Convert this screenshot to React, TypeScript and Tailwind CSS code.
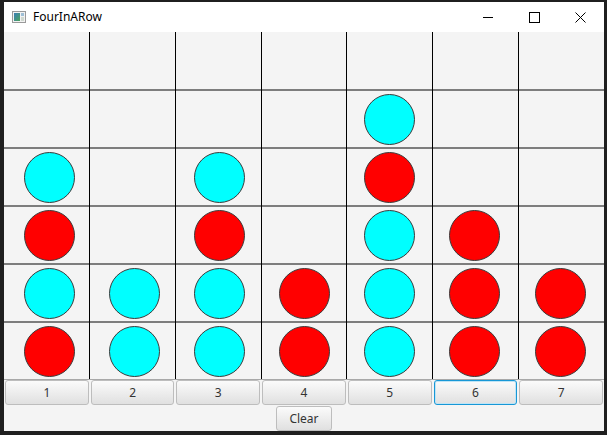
import React from "react";

type Cell = "" | "c" | "r";

const rows: Cell[][] = [
  ["", "", "", "", "", "", ""],
  ["", "", "", "", "c", "", ""],
  ["c", "", "c", "", "r", "", ""],
  ["r", "", "r", "", "c", "r", ""],
  ["c", "c", "c", "r", "c", "r", "r"],
  ["r", "c", "c", "r", "c", "r", "r"],
];

const colPad = [
  "pl-[7px]",
  "pl-[4px]",
  "pl-[2px]",
  "pl-[1px]",
  "",
  "pr-[2px]",
  "pr-[2px]",
];

function Disc({ kind }: { kind: Cell }) {
  if (!kind) return null;
  return (
    <div
      className={
        "w-[51px] h-[51px] rounded-full border border-[#3a3a3a] " +
        (kind === "c" ? "bg-[#00ffff]" : "bg-[#ff0000]")
      }
    />
  );
}

function Btn({ label, focused, className = "" }: { label: string; focused?: boolean; className?: string }) {
  return (
    <div
      className={
        "h-[25px] flex items-center justify-center rounded-[3px] text-[12px] text-[#333333] bg-gradient-to-b from-[#fbfbfb] to-[#e0e0e0] " +
        (focused
          ? "border border-[#1797d6] shadow-[inset_0_0_0_1px_#bfe4f5] "
          : "border border-[#bdbdbd] ") +
        className
      }
    >
      {label}
    </div>
  );
}

export default function App() {
  return (
    <div
      className="w-[607px] h-[435px] bg-[#1f1f1f] pt-[2px] pl-[4px]"
      style={{ fontFamily: '"Noto Sans", "Open Sans", sans-serif' }}
    >
      <div className="w-[600px] flex flex-col">
        {/* title bar */}
        <div className="h-[30px] bg-white flex items-center">
          <svg width="14" height="12" viewBox="0 0 14 12" className="ml-[8px] mr-[7px]">
            <defs>
              <linearGradient id="ig" x1="0" y1="0" x2="1" y2="1">
                <stop offset="0" stopColor="#3b7fb8" />
                <stop offset="1" stopColor="#4ba35a" />
              </linearGradient>
            </defs>
            <rect x="0.5" y="0.5" width="13" height="11" fill="#f2f2f2" stroke="#9a9a9a" />
            <rect x="2" y="2" width="6" height="8" fill="url(#ig)" />
            <rect x="9" y="2" width="3" height="3" fill="#9fbfd6" />
            <rect x="9" y="6" width="3" height="4" fill="#cfd8cf" />
          </svg>
          <span className="text-[12px] text-black leading-none">FourInARow</span>
          <div className="flex-1" />
          <svg width="11" height="11" viewBox="0 0 11 11" className="mr-[35px]">
            <line x1="0" y1="5.5" x2="10" y2="5.5" stroke="#000" strokeWidth="1" />
          </svg>
          <svg width="11" height="11" viewBox="0 0 11 11" className="mr-[35px]">
            <rect x="0.5" y="0.5" width="10" height="10" fill="none" stroke="#000" strokeWidth="1" />
          </svg>
          <svg width="11" height="11" viewBox="0 0 11 11" className="mr-[18px]">
            <line x1="0.5" y1="0.5" x2="10.5" y2="10.5" stroke="#000" strokeWidth="1" />
            <line x1="10.5" y1="0.5" x2="0.5" y2="10.5" stroke="#000" strokeWidth="1" />
          </svg>
        </div>

        {/* content */}
        <div className="h-[399px] bg-[#f4f4f4] flex flex-col">
          <div className="flex h-[347px]">
            {Array.from({ length: 7 }).map((_, c) => (
              <div
                key={c}
                className={"flex-1 flex flex-col " + (c > 0 ? "border-l border-l-black" : "")}
              >
                {rows.map((row, r) => (
                  <div
                    key={r}
                    className={
                      "flex items-center justify-center " +
                      colPad[c] +
                      " " +
                      (r === 0 ? "h-[57px]" : "h-[58px] border-t-2 border-t-[#7d7d7d]")
                    }
                  >
                    <Disc kind={row[c]} />
                  </div>
                ))}
              </div>
            ))}
          </div>
          <div className="h-px bg-[#a8a8a8]" />
          <div className="flex gap-[2px] px-[1px]">
            {["1", "2", "3", "4", "5", "6", "7"].map((n) => (
              <Btn key={n} label={n} focused={n === "6"} className="flex-1" />
            ))}
          </div>
          <div className="flex justify-center mt-[1px]">
            <Btn label="Clear" className="w-[56px]" />
          </div>
        </div>
      </div>
    </div>
  );
}
